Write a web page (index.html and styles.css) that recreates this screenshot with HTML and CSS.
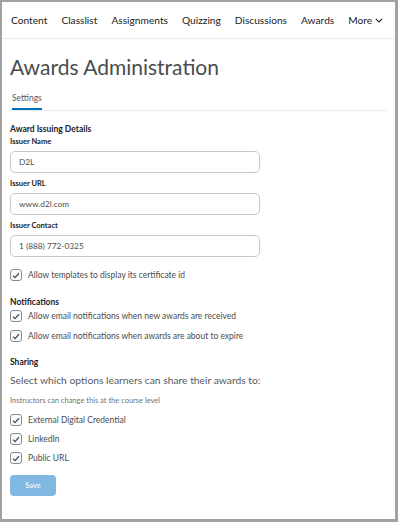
FILE: index.html
```html
<!DOCTYPE html>
<html>
<head>
<meta charset="utf-8">
<link rel="stylesheet" href="styles.css">
</head>
<body>
<div class="frame">
  <nav class="nav">
    <span class="nav-item">Content</span>
    <span class="nav-item">Classlist</span>
    <span class="nav-item">Assignments</span>
    <span class="nav-item">Quizzing</span>
    <span class="nav-item">Discussions</span>
    <span class="nav-item">Awards</span>
    <span class="nav-item more">More
      <svg class="chev" width="8" height="5" viewBox="0 0 8 5"><path d="M0.8 0.8 L4 4 L7.2 0.8" fill="none" stroke="#202122" stroke-width="1.1"/></svg>
    </span>
  </nav>
  <main class="page">
    <h1 class="title">Awards Administration</h1>
    <div class="tabs"><span class="tab active">Settings</span></div>

    <h2 class="section">Award Issuing Details</h2>
    <label class="field-label first">Issuer Name</label>
    <div class="input">D2L</div>
    <label class="field-label">Issuer URL</label>
    <div class="input">www.d2l.com</div>
    <label class="field-label">Issuer Contact</label>
    <div class="input">1 (888) 772-0325</div>

    <div class="check first"><span class="box"><svg width="8" height="7" viewBox="0 0 8 7"><path d="M1 3.6 L3 5.6 L7 1.2" fill="none" stroke="#494c4e" stroke-width="1.3"/></svg></span>Allow templates to display its certificate id</div>

    <h2 class="section notif">Notifications</h2>
    <div class="check notif-first"><span class="box"><svg width="8" height="7" viewBox="0 0 8 7"><path d="M1 3.6 L3 5.6 L7 1.2" fill="none" stroke="#494c4e" stroke-width="1.3"/></svg></span>Allow email notifications when new awards are received</div>
    <div class="check tight"><span class="box"><svg width="8" height="7" viewBox="0 0 8 7"><path d="M1 3.6 L3 5.6 L7 1.2" fill="none" stroke="#494c4e" stroke-width="1.3"/></svg></span>Allow email notifications when awards are about to expire</div>

    <h2 class="section sharing">Sharing</h2>
    <p class="lead">Select which options learners can share their awards to:</p>
    <p class="hint">Instructors can change this at the course level</p>
    <div class="check share share-first"><span class="box"><svg width="8" height="7" viewBox="0 0 8 7"><path d="M1 3.6 L3 5.6 L7 1.2" fill="none" stroke="#494c4e" stroke-width="1.3"/></svg></span>External Digital Credential</div>
    <div class="check share"><span class="box"><svg width="8" height="7" viewBox="0 0 8 7"><path d="M1 3.6 L3 5.6 L7 1.2" fill="none" stroke="#494c4e" stroke-width="1.3"/></svg></span>LinkedIn</div>
    <div class="check share"><span class="box"><svg width="8" height="7" viewBox="0 0 8 7"><path d="M1 3.6 L3 5.6 L7 1.2" fill="none" stroke="#494c4e" stroke-width="1.3"/></svg></span>Public URL</div>

    <button class="save" disabled>Save</button>
  </main>
</div>
</body>
</html>
```

FILE: styles.css
```css
html, body {
  margin: 0;
  padding: 0;
  background: #ffffff;
}
body {
  font-family: Lato, "Open Sans", sans-serif;
  color: #494c4e;
}
.frame {
  width: 398px;
  height: 522px;
  box-sizing: border-box;
  border: 2px solid #a2a2a2;
  border-right-width: 3px;
  border-bottom-width: 3px;
  overflow: hidden;
}
.nav {
  height: 37px;
  box-sizing: border-box;
  border-bottom: 1px solid #e8ebf0;
  display: flex;
  align-items: center;
  padding-left: 9px;
  gap: 14px;
  font-size: 10.2px;
  color: #202122;
}
.nav-item {
  white-space: nowrap;
}
.more {
  display: flex;
  align-items: center;
  gap: 3px;
}
.page {
  padding: 0 8px;
}
.title {
  margin: 14px 0 0 0;
  font-size: 21px;
  font-weight: 400;
  line-height: 28px;
  color: #494c4e;
}
.tabs {
  margin-top: 4px;
  border-bottom: 1px solid #e8ebf0;
  padding-left: 2px;
}
.tab {
  display: inline-block;
  font-size: 8.5px;
  line-height: 12px;
  padding-bottom: 4px;
  border-bottom: 2px solid #006fbf;
  color: #565a5c;
}
.section {
  margin: 12px 0 0 0;
  font-size: 8.5px;
  font-weight: 700;
  line-height: 12px;
  color: #202122;
}
.section.notif { margin-top: 15px; }
.section.sharing { margin-top: 14px; }
.field-label {
  display: block;
  margin-top: 4px;
  font-size: 7.5px;
  font-weight: 700;
  line-height: 12px;
  color: #202122;
}
.field-label.first { margin-top: 1px; }
.input {
  margin-top: 3px;
  width: 250px;
  height: 22px;
  box-sizing: border-box;
  border: 1px solid #c5c9cc;
  border-radius: 5px;
  padding-left: 8px;
  display: flex;
  align-items: center;
  font-size: 8.3px;
  color: #494c4e;
  margin-bottom: 5px;
}
.check {
  display: flex;
  align-items: center;
  gap: 6px;
  font-size: 8.5px;
  line-height: 12px;
  color: #494c4e;
}
.check.first { margin-top: 12px; }
.check.notif-first { margin-top: 2px; }
.check.tight { margin-top: 8px; }
.box {
  width: 12px;
  height: 12px;
  box-sizing: border-box;
  border: 1px solid #868c8f;
  border-radius: 3px;
  display: flex;
  align-items: center;
  justify-content: center;
  background: #f9fbff;
  flex: none;
}
.lead {
  margin: 5px 0 0 0;
  font-size: 10.3px;
  line-height: 14px;
  color: #565a5c;
}
.hint {
  margin: 9px 0 0 0;
  font-size: 7.5px;
  line-height: 10px;
  color: #6e7477;
}
.check.share {
  margin-top: 7px;
}
.check.share-first {
  margin-top: 8px;
}
.save {
  display: block;
  margin-top: 11px;
  width: 46px;
  height: 21px;
  border: none;
  border-radius: 4px;
  background: #80b8e2;
  color: #e6f1fa;
  font-family: Lato, sans-serif;
  font-size: 7.5px;
  font-weight: 700;
  padding: 0;
}
```
